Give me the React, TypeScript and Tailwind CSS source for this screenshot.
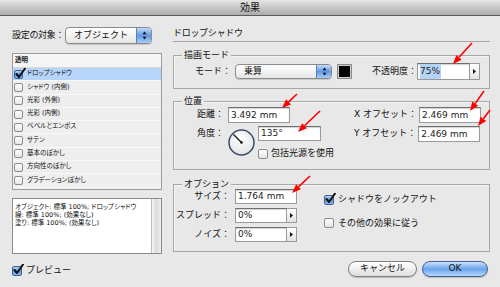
import React from 'react';

const EFFECTS = [
  'シャドウ (内側)',
  '光彩 (外側)',
  '光彩 (内側)',
  'ベベルとエンボス',
  'サテン',
  '基本のぼかし',
  '方向性のぼかし',
  'グラデーションぼかし',
];

// red annotation arrows: tail -> head
const ARROWS = [
  [472, 43, 453, 64],
  [297, 94, 282, 108],
  [320, 111, 298, 132],
  [484, 91, 470, 111],
  [490, 110, 478, 126],
  [310, 176, 292, 193],
];

function Checkbox({ checked = false, size = 10 }: { checked?: boolean; size?: number }) {
  const box = size === 9 ? 'w-[9px] h-[9px]' : 'w-[10px] h-[10px]';
  return (
    <span
      className={`relative shrink-0 rounded-[2px] border ${box} ${
        checked
          ? 'border-[#3f5f95] bg-linear-to-b from-[#b8d4f5] via-[#5c96e0] to-[#8ab9ef]'
          : 'border-[#8d8d8d] bg-linear-to-b from-white to-[#e4e4e4]'
      }`}
    >
      {checked && (
        <svg className="absolute -top-[3px] left-[0px] w-[11px] h-[11px]" viewBox="0 0 11 11">
          <path d="M1.5 6 L4 9 L10 0.5" fill="none" stroke="#111" strokeWidth="2" strokeLinecap="round" strokeLinejoin="round" />
        </svg>
      )}
    </span>
  );
}

function Stepper() {
  return (
    <svg width="5" height="9" viewBox="0 0 5 9">
      <path d="M2.5 0.5 L4.5 3.3 L0.5 3.3 Z" fill="#111" />
      <path d="M2.5 8.5 L4.5 5.7 L0.5 5.7 Z" fill="#111" />
    </svg>
  );
}

function Popup({ value, className }: { value: string; className: string }) {
  return (
    <div
      className={`flex rounded-[4px] border border-[#8a8a8a] bg-linear-to-b from-white to-[#e6e6e6] overflow-hidden shadow-[0_1px_1px_rgba(0,0,0,0.15)] ${className}`}
    >
      <span className="flex-1 flex items-center pl-[8px] text-[9px]">{value}</span>
      <span className="w-[15px] flex items-center justify-center border-l border-[#5b7fb5] bg-linear-to-b from-[#c5dcf7] via-[#5e98e4] to-[#a8cdf6]">
        <Stepper />
      </span>
    </div>
  );
}

function Field({ value, className, selected = false }: { value: string; className: string; selected?: boolean }) {
  return (
    <div
      className={`flex items-center border border-[#9a9a9a] border-t-[#6f6f6f] bg-white shadow-[inset_0_1px_1px_rgba(0,0,0,0.18)] pl-[2px] text-[9px] leading-none text-[#222] ${className}`}
    >
      {selected ? <span className="bg-[#b5d3f7] h-full flex items-center pr-[1px]">{value}</span> : value}
    </div>
  );
}

function ArrowButton() {
  return (
    <span className="w-[10px] h-full flex items-center justify-center border border-l-0 border-[#9a9a9a] bg-linear-to-b from-white to-[#e2e2e2]">
      <svg width="3" height="5" viewBox="0 0 3 5">
        <path d="M0 0 L3 2.5 L0 5 Z" fill="#111" />
      </svg>
    </span>
  );
}

function Group({ title, className, children }: { title: string; className: string; children: React.ReactNode }) {
  return (
    <div className={`relative border border-[#a6a6a6] shadow-[inset_1px_1px_0_rgba(255,255,255,0.55)] ${className}`}>
      <span className="absolute -top-[7px] left-[8px] bg-[#e8e8e8] px-[2px] text-[9px] leading-[12px]">{title}</span>
      {children}
    </div>
  );
}

function Label({ text, className = '' }: { text: string; className?: string }) {
  return <span className={`shrink-0 text-right text-[9px] ${className}`}>{text}</span>;
}

function Dial() {
  return (
    <svg width="27" height="27" viewBox="0 0 27 27" className="shrink-0">
      <defs>
        <radialGradient id="dialbg" cx="45%" cy="35%" r="70%">
          <stop offset="0" stopColor="#ffffff" />
          <stop offset="1" stopColor="#e2e2e2" />
        </radialGradient>
      </defs>
      <circle cx="13.5" cy="13.5" r="12.5" fill="url(#dialbg)" stroke="#3d4b6d" strokeWidth="1.5" />
      <line x1="13.5" y1="13.5" x2="5.5" y2="5.5" stroke="#111" strokeWidth="1.3" />
      <circle cx="13.5" cy="13.5" r="1.3" fill="#111" />
    </svg>
  );
}

function Arrows() {
  return (
    <svg className="absolute inset-0 pointer-events-none" width="500" height="287">
      {ARROWS.map(([x1, y1, x2, y2], i) => {
        const dx = x2 - x1;
        const dy = y2 - y1;
        const len = Math.hypot(dx, dy);
        const ux = dx / len;
        const uy = dy / len;
        const bx = x2 - ux * 9;
        const by = y2 - uy * 9;
        const pts = `${x2},${y2} ${bx - uy * 3.5},${by + ux * 3.5} ${bx + uy * 3.5},${by - ux * 3.5}`;
        return (
          <g key={i}>
            <line x1={x1} y1={y1} x2={bx} y2={by} stroke="#f00" strokeWidth="1.6" />
            <polygon points={pts} fill="#f00" />
          </g>
        );
      })}
    </svg>
  );
}

function Button({ label, primary = false }: { label: string; primary?: boolean }) {
  return (
    <span
      className={`h-[16px] rounded-full border flex items-center justify-center text-[9px] shadow-[0_1px_1px_rgba(0,0,0,0.2)] ${
        primary
          ? 'w-[66px] border-[#3e5f99] bg-linear-to-b from-[#cfe3fa] via-[#6aa3ea] to-[#b5d8fb]'
          : 'w-[69px] border-[#7f7f7f] bg-linear-to-b from-white via-[#f0f0f0] to-[#dcdcdc]'
      }`}
    >
      {label}
    </span>
  );
}

export default function App() {
  return (
    <div className="relative w-[500px] h-[287px] overflow-hidden bg-[#e8e8e8] text-[#111] font-['DejaVu_Sans','Noto_Sans_CJK_JP',sans-serif]">
      {/* Title bar */}
      <div className="h-[16px] flex items-center justify-center border-b border-[#5c5c5c] bg-linear-to-b from-[#e6e6e6] to-[#ababab] text-[10px]">
        効果
      </div>

      <div className="flex pl-[12px] pt-[11px]">
        {/* Left column */}
        <div className="w-[150px] flex flex-col">
          <div className="flex items-center h-[17px]">
            <span className="w-[53px] text-[9px] tracking-[-0.3px]">設定の対象：</span>
            <Popup value="オブジェクト" className="w-[87px] h-[17px]" />
          </div>

          <div className="mt-[9px] h-[137px] border border-[#9b9b9b] bg-[#eeeeee] text-[6.5px] [font-feature-settings:'palt']">
            <div className="h-[14px] flex items-center pl-[2px] bg-[#f5f5f5] border-b border-[#d8d8d8] font-bold">透明</div>
            <div className="h-[13.3px] flex items-center pl-[1px] bg-[#b7d5fb] border-b border-[#f8f8f8]">
              <Checkbox checked size={9} />
              <span className="ml-[4px]">ドロップシャドウ</span>
            </div>
            {EFFECTS.map((e) => (
              <div key={e} className="h-[13.3px] flex items-center pl-[1px] border-b border-[#f8f8f8]">
                <Checkbox size={9} />
                <span className="ml-[4px]">{e}</span>
              </div>
            ))}
          </div>

          <div className="mt-[8px] h-[56px] flex border border-[#8a8a8a] bg-white">
            <div className="flex-1 pl-[2px] pt-[4px] text-[6.5px] leading-[8px] [font-feature-settings:'palt']">
              <div>オブジェクト: 標準 100%; ドロップシャドウ</div>
              <div>線: 標準 100%; (効果なし)</div>
              <div>塗り: 標準 100%; (効果なし)</div>
            </div>
            <div className="w-[10px] border-l border-[#bdbdbd] bg-linear-to-r from-[#f4f4f4] via-[#dadada] to-[#f0f0f0]" />
          </div>

          <div className="mt-[10px] flex items-center">
            <Checkbox checked />
            <span className="ml-[4px] text-[9px]">プレビュー</span>
          </div>
        </div>

        {/* Right column */}
        <div className="ml-[11px] w-[317px] flex flex-col">
          <div className="h-[15px] flex items-center text-[9px] tracking-[-0.3px] border-b border-[#a4a4a4]">ドロップシャドウ</div>

          <Group title="描画モード" className="mt-[13px] h-[34px]">
            <div className="flex items-center pt-[5px] h-[21px] box-content">
              <Label text="モード：" className="w-[57px]" />
              <Popup value="乗算" className="ml-[4px] w-[97px] h-[15px]" />
              <span className="ml-[5px] w-[15px] h-[15px] border border-[#8a8a8a] p-[1px] bg-[#d0d0d0]">
                <span className="block w-full h-full bg-black" />
              </span>
              <Label text="不透明度：" className="ml-[20px]" />
              <div className="flex h-[17px]">
                <Field value="75%" selected className="w-[53px] h-[17px]" />
                <ArrowButton />
              </div>
            </div>
          </Group>

          <Group title="位置" className="mt-[12px] h-[69px]">
            <div className="flex pt-[5px]">
              <div className="flex flex-col">
                <div className="flex items-center h-[16px]">
                  <Label text="距離：" className="w-[50px]" />
                  <Field value="3.492 mm" className="ml-[4px] w-[62px] h-[16px]" />
                </div>
                <div className="flex mt-[3px]">
                  <Label text="角度：" className="w-[50px] h-[15px] leading-[15px]" />
                  <span className="ml-[4px] mt-[3px]">
                    <Dial />
                  </span>
                  <div className="ml-[3px] flex flex-col">
                    <Field value="135°" className="w-[63px] h-[15px]" />
                    <div className="mt-[6px] flex items-center">
                      <Checkbox />
                      <span className="ml-[3px] text-[9px]">包括光源を使用</span>
                    </div>
                  </div>
                </div>
              </div>
              <div className="ml-auto pr-[8px] flex flex-col">
                <div className="flex items-center h-[16px]">
                  <Label text="X オフセット：" />
                  <Field value="2.469 mm" className="ml-[2px] w-[62px] h-[16px]" />
                </div>
                <div className="flex items-center h-[16px] mt-[3px]">
                  <Label text="Y オフセット：" />
                  <Field value="2.469 mm" className="ml-[2px] w-[62px] h-[16px]" />
                </div>
              </div>
            </div>
          </Group>

          <Group title="オプション" className="mt-[14px] h-[68px]">
            <div className="flex pt-[4px]">
              <div className="w-[150px] flex flex-col gap-[3px]">
                <div className="flex items-center h-[15px]">
                  <Label text="サイズ：" className="w-[56px]" />
                  <Field value="1.764 mm" className="ml-[5px] w-[62px] h-[15px]" />
                </div>
                <div className="flex items-center h-[15px] mt-[1px]">
                  <Label text="スプレッド：" className="w-[56px]" />
                  <div className="ml-[5px] flex h-[15px]">
                    <Field value="0%" className="w-[52px] h-[15px]" />
                    <ArrowButton />
                  </div>
                </div>
                <div className="flex items-center h-[15px] mt-[1px]">
                  <Label text="ノイズ：" className="w-[56px]" />
                  <div className="ml-[5px] flex h-[15px]">
                    <Field value="0%" className="w-[52px] h-[15px]" />
                    <ArrowButton />
                  </div>
                </div>
              </div>
              <div className="flex flex-col pt-[4px] gap-[10px]">
                <div className="flex items-center">
                  <Checkbox checked />
                  <span className="ml-[4px] text-[9px]">シャドウをノックアウト</span>
                </div>
                <div className="flex items-center">
                  <Checkbox />
                  <span className="ml-[4px] text-[9px]">その他の効果に従う</span>
                </div>
              </div>
            </div>
          </Group>

          <div className="mt-[9px] pr-[2px] flex justify-end gap-[5px]">
            <Button label="キャンセル" />
            <Button label="OK" primary />
          </div>
        </div>
      </div>

      <Arrows />
    </div>
  );
}
